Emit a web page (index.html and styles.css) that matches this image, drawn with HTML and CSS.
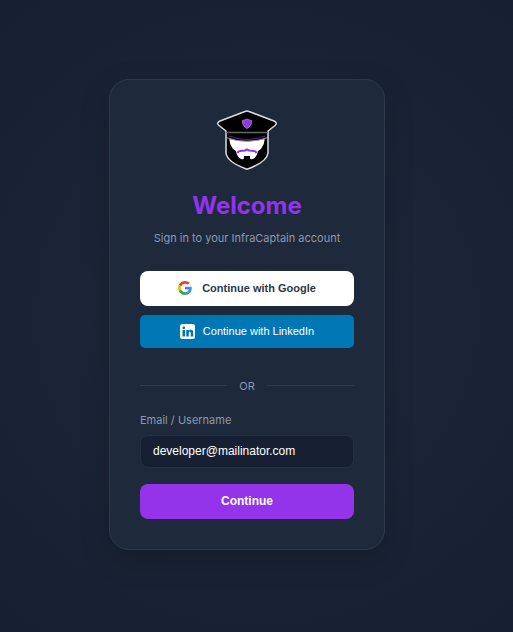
FILE: index.html
```
<!DOCTYPE html>
<html lang="en">

<head>
    <meta charset="UTF-8">
    <meta name="viewport" content="width=device-width, initial-scale=1.0">
    <title>InfraCaptain - Sign In</title>
    <link rel="stylesheet" href="styles.css">
</head>

<body>
    <main class="login-card">
        <svg class="logo" viewBox="0 0 60 60" role="img" aria-label="InfraCaptain">
            <path d="M28 1.500 Q30 0.500 32 1.500 L57 11 Q61 13 58 15.500 L51 21 V43 Q50 52 30 59.300 Q10 52 9 43 V21 L2 15.500 Q-1 13 3 11 Z" fill="#000" stroke="#ddd" stroke-width="1.5" stroke-linejoin="round"/>
            <path d="M9 22.5 H51" stroke="#666" stroke-width="1.5"/>
            <path d="M12 26 Q30 33 48 26" fill="none" stroke="#5b1a94" stroke-width="1"/>
            <path d="M12.500 29 Q30 34 47.500 29 Q48 34 44 39 L41 41 Q40 47 36 49 Q33 50 33 48 V46 H27 V48 Q27 50 24 49 Q20 47 19 41 L16 39 Q12 34 12.500 29 Z" fill="#fff"/>
            <path d="M9 27.500 Q30 35 51 27.500" fill="none" stroke="#bbb" stroke-width="0.800"/>
            <path d="M21 42.500 Q21 41 23 41 L28 40.500 L30 39.500 L32 40.500 L37 41 Q39 41 39 42.500" fill="none" stroke="#9333ea" stroke-width="2" stroke-linecap="round" stroke-linejoin="round"/>
            <path d="M30 9 Q32 10 34.500 10.500 Q35 16 30 18.500 Q25 16 25.500 10.500 Q28 10 30 9 Z" fill="#9333ea" stroke="#a78bba" stroke-width="0.800"/>
        </svg>
        <h1>Welcome</h1>
        <p class="subtitle">Sign in to your InfraCaptain account</p>

        <div class="social-buttons">
            <button type="button" class="btn btn-google">
                <svg class="google-icon" viewBox="0 0 48 48" aria-hidden="true">
                    <path fill="#EA4335" d="M24 9.500c3.540 0 6.710 1.220 9.210 3.600l6.850-6.850C35.900 2.380 30.470 0 24 0 14.620 0 6.510 5.380 2.560 13.220l7.980 6.190C12.430 13.720 17.740 9.500 24 9.500z"/>
                    <path fill="#4285F4" d="M46.980 24.550c0-1.570-.15-3.090-.38-4.550H24v9.020h12.940c-.58 2.960-2.260 5.480-4.780 7.180l7.730 6c4.510-4.180 7.090-10.360 7.090-17.650z"/>
                    <path fill="#FBBC05" d="M10.530 28.590c-.48-1.450-.76-2.990-.76-4.590s.27-3.140.76-4.590l-7.980-6.190C.92 16.460 0 20.120 0 24s.92 7.540 2.560 10.780l7.970-6.190z"/>
                    <path fill="#34A853" d="M24 48c6.480 0 11.930-2.130 15.890-5.810l-7.730-6c-2.150 1.450-4.920 2.300-8.160 2.300-6.260 0-11.570-4.220-13.470-9.910l-7.980 6.190C6.510 42.620 14.620 48 24 48z"/>
                </svg>
                Continue with Google
            </button>
            <button type="button" class="btn btn-linkedin">
                <svg class="linkedin-icon" viewBox="0 0 24 24" aria-hidden="true">
                    <rect width="24" height="24" rx="4" fill="#fff"/>
                    <circle cx="6" cy="6" r="2.200" fill="#0077b5"/>
                    <path fill="#0077b5" d="M4 9.500h4V20H4zM10 9.500h3.800v1.600c.7-1.100 1.900-1.900 3.500-1.900 3 0 3.900 2 3.900 4.900V20h-4v-5.300c0-1.400-.3-2.400-1.500-2.400-1.300 0-1.700 1-1.700 2.400V20h-4z"/>
                </svg>
                Continue with LinkedIn
            </button>
        </div>

        <div class="divider">OR</div>

        <form class="login-form">
            <label for="email">Email / Username</label>
            <input type="text" id="email" name="email" value="developer@mailinator.com">
            <button type="submit" class="btn btn-continue">Continue</button>
        </form>
    </main>
</body>

</html>
```
FILE: styles.css
```
* {
    box-sizing: border-box;
}

body {
    font-family: Inter, sans-serif;
    background: radial-gradient(circle at center, #1e293b 0%, #171f32 100%);
    display: flex;
    justify-content: center;
    align-items: center;
    min-height: 100vh;
    margin: 0;
    padding: 16px 19px 20px 0;
    color: #8b9ab0;
}

.login-card {
    width: 100%;
    max-width: 276px;
    padding: 30px;
    background: #1e293b;
    border: 1px solid #2e3a4b;
    border-radius: 20px;
    box-shadow: 0 10px 30px rgba(0, 0, 0, 0.2);
    text-align: center;
}

.logo {
    display: block;
    width: 60px;
    height: 60px;
    margin: 0 auto 20px;
}

h1 {
    margin: 0 0 8px;
    font-size: 24px;
    line-height: 32px;
    font-weight: 700;
    color: #9333ea;
}

.subtitle {
    margin: 0 0 25px;
    font-size: 11px;
    line-height: 16px;
}

.social-buttons {
    display: flex;
    flex-direction: column;
    gap: 9px;
}

.btn {
    display: flex;
    justify-content: center;
    align-items: center;
    width: 100%;
    height: 35px;
    padding: 0;
    border: none;
    border-radius: 8px;
    font-family: "Liberation Sans", Arial, sans-serif;
    font-size: 12px;
    font-weight: 700;
    color: #fff;
    cursor: pointer;
}

.btn-google {
    gap: 10px;
    background: #fff;
    font-size: 11px;
    color: #2d3748;
}

.btn-linkedin {
    gap: 8px;
    height: 33px;
    border-radius: 5px;
    background: #0077b5;
    font-size: 11px;
    font-weight: 400;
}

.btn-continue {
    background: #9333ea;
}

.google-icon {
    width: 14px;
    height: 14px;
}

.linkedin-icon {
    width: 15px;
    height: 15px;
}

.divider {
    display: flex;
    align-items: center;
    gap: 12px;
    margin: 30px 0 18px;
    font-size: 11px;
    line-height: 16px;
}

.divider::before,
.divider::after {
    content: "";
    flex: 1;
    height: 1px;
    background: #2f3b4c;
}

.login-form label {
    display: block;
    margin-bottom: 7px;
    font-size: 11px;
    line-height: 16px;
    text-align: left;
}

.login-form input {
    display: block;
    width: 100%;
    height: 33px;
    margin-bottom: 16px;
    padding: 0 12px;
    background: #171f32;
    border: 1px solid #253043;
    border-radius: 8px;
    font-family: "Liberation Sans", Arial, sans-serif;
    font-size: 12px;
    color: #fff;
}
```
